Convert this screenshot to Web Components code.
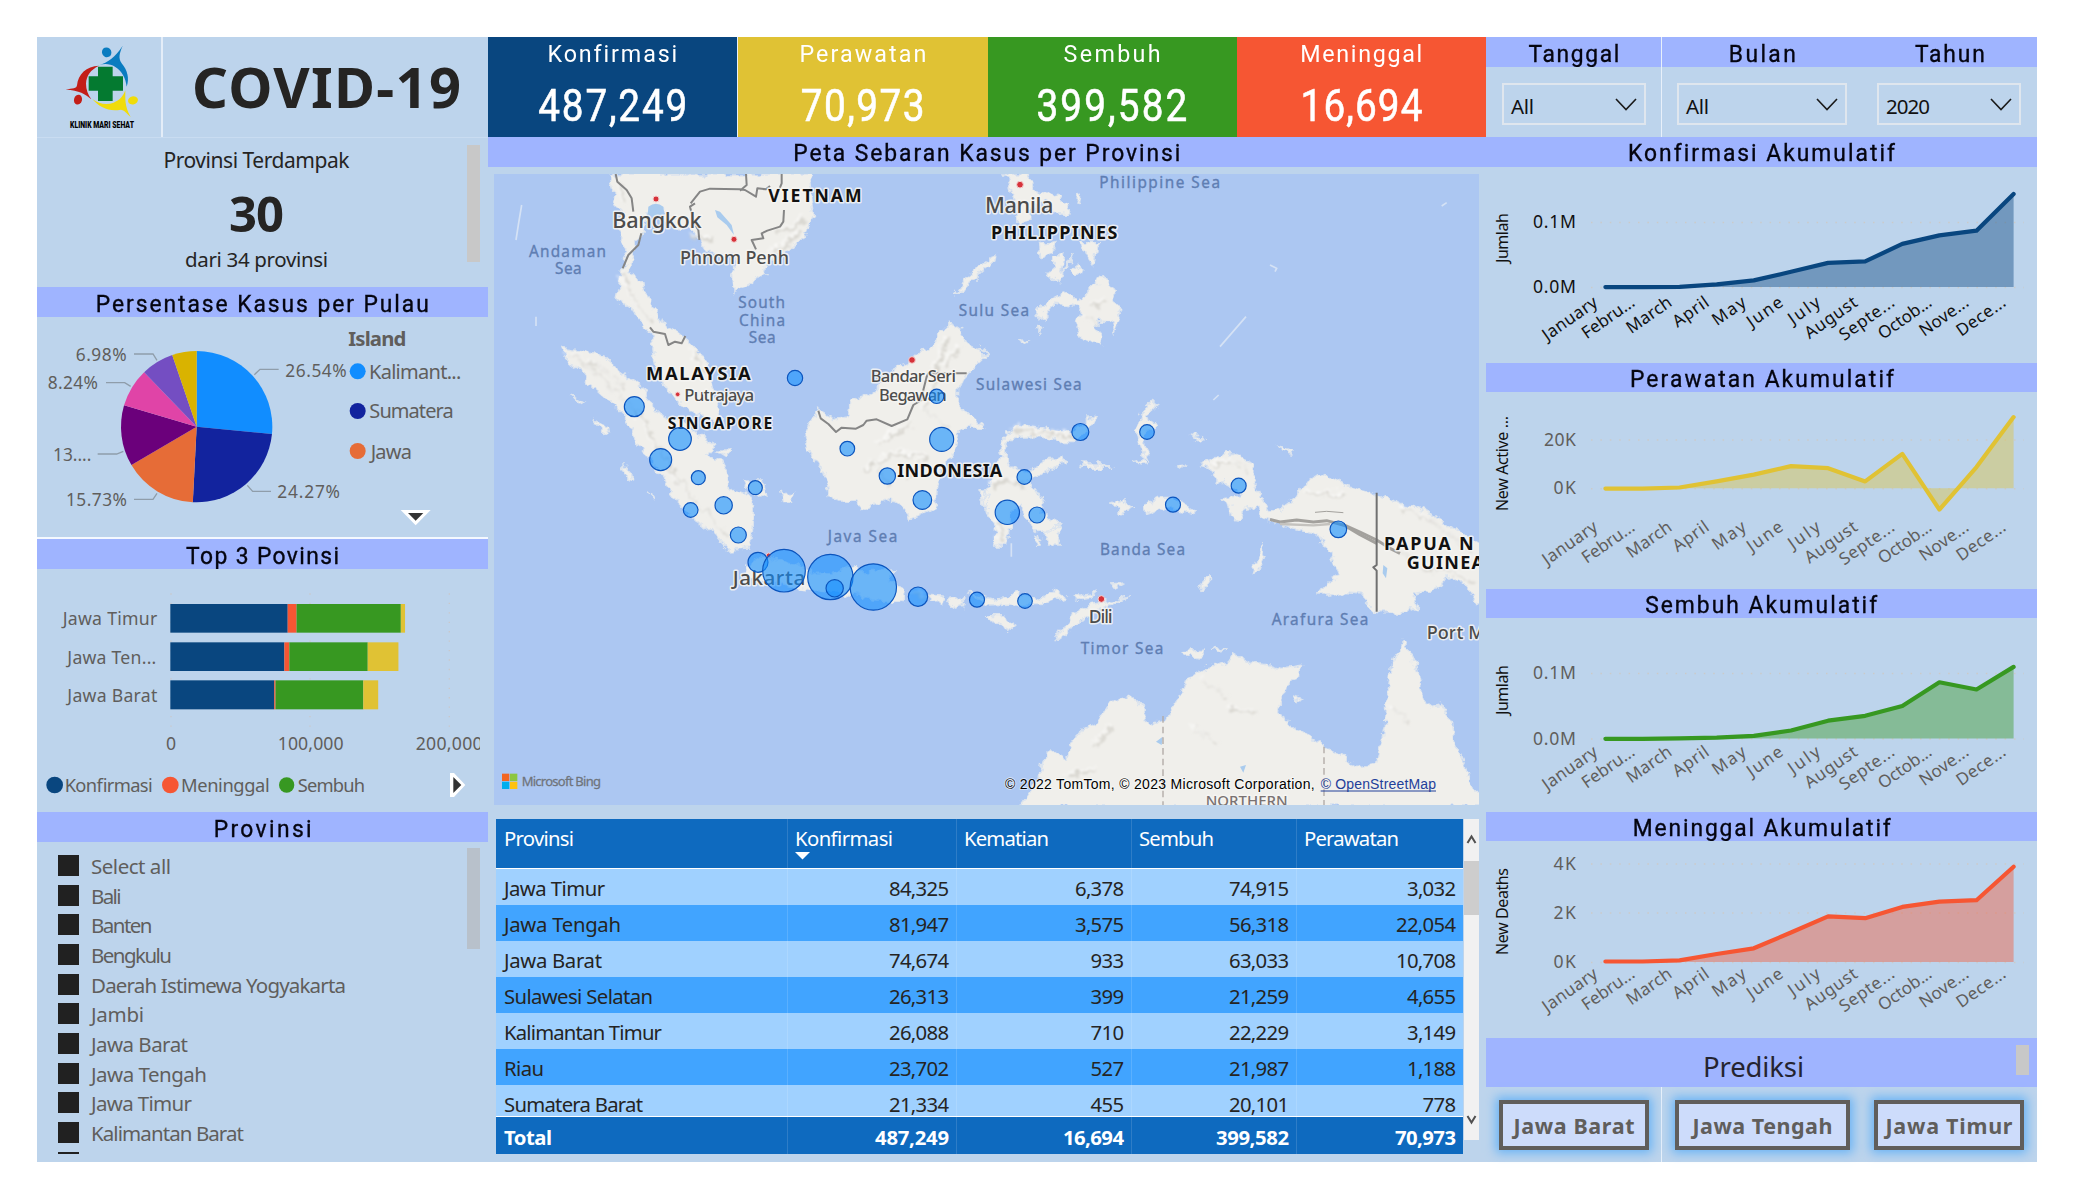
<!DOCTYPE html>
<html lang="id">
<head>
<meta charset="utf-8">
<title>COVID-19 Dashboard</title>
<style>
html,body{margin:0;padding:0;background:#fff}
body{width:2075px;height:1200px;overflow:hidden;font-family:"Noto Sans","Open Sans",sans-serif;color:#252423}
</style>
</head>
<body>
<covid-dashboard></covid-dashboard>
<script>
const SANS='"Noto Sans","Open Sans",sans-serif';
const DIN='Roboto,"Liberation Sans",sans-serif';

class Base extends HTMLElement{
  connectedCallback(){
    if(this.shadowRoot)return;
    const r=this.attachShadow({mode:'open'});
    r.innerHTML=`<style>*{box-sizing:border-box}:host{box-sizing:border-box;display:block}${this.css?this.css():''}</style>${this.html()}`;
  }
}
const def=(n,c)=>customElements.define(n,c);

/* svg text spread between two x positions */
const T=(x1,x2,y,s,fs,extra='')=>`<text x="${x1}" y="${y}" font-size="${fs}" textLength="${x2-x1}" ${extra}>${s}</text>`;

/* inline text whose tracking is adjusted to a given width; sx narrows the glyphs */
def('fit-text',class extends HTMLElement{
  connectedCallback(){
    if(this.shadowRoot)return;
    this.attachShadow({mode:'open'}).innerHTML='<style>:host{display:inline-block;white-space:nowrap}</style><slot></slot>';
    const sx=+this.getAttribute('sx')||1, w=+this.getAttribute('w')/sx;
    if(!w)return;
    const n=this.textContent.length, nat=this.getBoundingClientRect().width;
    const ls=(w+1-nat)/(n-1);
    this.style.letterSpacing=ls.toFixed(3)+'px';
    this.style.marginRight=(-ls).toFixed(3)+'px';
    if(sx!==1)this.style.transform=`scaleX(${sx})`;
  }
});

def('title-bar',class extends Base{
  css(){return `:host{display:flex;align-items:center;justify-content:center;background:#9fb4ff;font:400 24px/28px ${DIN};-webkit-text-stroke:.35px currentColor;color:#050510;padding-top:3px;overflow:hidden;white-space:nowrap}:host(.up){padding-top:1px}`}
  html(){return `<fit-text sx=".95" w="${this.getAttribute('w')}">${this.getAttribute('label')}</fit-text>`}
});

def('clinic-logo',class extends Base{
  css(){return `:host{width:126px;height:100px;border-right:2px solid #e4edf8}svg{display:block}`}
  html(){return `<svg width="124" height="100" viewBox="21 21 372 300">
    <ellipse cx="230" cy="67" rx="14" ry="15" fill="#0a7cc0" transform="rotate(-25 230 67)"/>
    <path d="M278 47C268 71 264 84 276 101C292 120 299 144 290 170C287 146 277 124 256 111C240 101 222 100 208 106C232 96 255 84 278 47Z" fill="#0a7cc0"/>
    <path d="M207 107C182 119 169 137 168 161C168 178 174 194 184 208C166 193 148 180 107 179C128 175 140 176 141 166C144 133 169 108 207 107Z" fill="#c31e18"/>
    <ellipse cx="144" cy="209" rx="12" ry="15" fill="#c31e18" transform="rotate(15 144 209)"/>
    <path d="M187 207C207 222 229 226 251 218C269 211 280 198 286 181C286 203 283 229 302 261C288 248 283 240 272 239C238 245 209 234 187 207Z" fill="#f0dc0a"/>
    <ellipse cx="309" cy="211" rx="15" ry="12" fill="#f0dc0a" transform="rotate(-15 309 211)"/>
    <path d="M204 110h44v29h31v43h-31v31h-44v-31h-28v-43h28z" fill="#047a30"/>
    <text x="120" y="294" font-family='${DIN}' font-size="25" font-weight="900" textLength="192" lengthAdjust="spacingAndGlyphs">KLINIK MARI SEHAT</text>
  </svg>`}
});

def('page-heading',class extends Base{
  css(){return `:host{flex:1;height:100px;display:flex;align-items:center;padding:0 0 2px 29px;font:700 56px/76px ${SANS};color:#252423}`}
  html(){return `<fit-text w="268">COVID-19</fit-text>`}
});

def('affected-card',class extends Base{
  css(){return `:host{height:150px;display:flex;border-top:1px solid #c9dcf1;padding:7px 8px 0 0;color:#252423;font:400 21px/30px ${SANS}}
    .c{flex:1;padding-left:9px;display:flex;flex-direction:column;align-items:center}
    .b{font:700 49px/60px ${SANS};margin:8px 0 1px}.s{font-size:20.5px}
    .bar{width:13px;height:117px;background:#c8c8c8}`}
  html(){return `<div class="c"><fit-text w="185">Provinsi Terdampak</fit-text><fit-text class="b" w="54">30</fit-text><fit-text class="s" w="142">dari 34 provinsi</fit-text></div><div class="bar"></div>`}
});

def('island-pie',class extends Base{
  css(){return `:host{height:222px;border-bottom:2px solid #f4f8ff}svg{display:block;font-family:${SANS}}`}
  html(){
    const v=[[26.54,'#118dff'],[24.27,'#12239e'],[15.73,'#e66c37'],[13.01,'#6b007b'],[8.24,'#e044a7'],[6.98,'#744ec2'],[5.23,'#d9b300']];
    let a=0,p='';const P=k=>[500+227*Math.sin(k*Math.PI/50),440-227*Math.cos(k*Math.PI/50)].map(n=>n.toFixed(1)).join(' ');
    for(const [s,c] of v){p+=`<path fill="${c}" d="M500 440L${P(a)}A227 227 0 0 1 ${P(a+s)}Z"/>`;a+=s}
    const L=[[673,284,690,268,746,268],[652,616,668,634,723,634],[381,640,369,658,312,658],[280,514,260,522,203,522],[302,319,284,308,228,308],[381,241,369,222,312,222]]
      .map(l=>`<polyline points="${l}" fill="none" stroke="#8f9daa" stroke-width="4"/>`).join('');
    return `<svg width="451" height="220" viewBox="21 111 1353 660" fill="#605e5c">${p}${L}
      ${T(137,290,242,'6.98%',52)}${T(53,204,327,'8.24%',52)}${T(69,184,543,'13....',52)}${T(108,291,678,'15.73%',52)}${T(766,950,291,'26.54%',52)}${T(742,930,654,'24.27%',52)}
      ${T(955,1129,197,'Island',61,'font-weight="700"')}
      <circle cx="983" cy="274" r="24" fill="#118dff"/><circle cx="983" cy="393" r="24" fill="#12239e"/><circle cx="983" cy="513" r="24" fill="#e66c37"/>
      ${T(1017,1294,297,'Kalimant...',60)}${T(1018,1271,413,'Sumatera',60)}${T(1022,1146,536,'Jawa',60)}
      <path d="M1112 690H1202L1157 736Z" fill="#fff"/><path d="M1134 699H1180L1157 722Z" fill="#333"/></svg>`}
});

def('top-bars',class extends Base{
  css(){return `:host{height:243px}svg{display:block;font-family:${SANS}}`}
  html(){
    const rows=[[222,86,84325,6378,74915,3032],[337,86,81947,3575,56318,22054],[451,87,74674,933,63033,10708]],C=['#09467f','#f65633','#379821','#e0c234'];
    let b='';
    for(const [y,h,...v] of rows){let x=421;v.forEach((n,i)=>{const w=n*.004175;b+=`<rect x="${x}" y="${y}" width="${w}" height="${h}" fill="${C[i]}"/>`;x+=w})}
    const g=[423,840,1258].map(x=>`<line x1="${x}" x2="${x}" y1="190" y2="592" stroke="#c9c8cb" stroke-width="4" stroke-dasharray="4 24.3"/>`).join('');
    return `<svg width="451" height="243" viewBox="21 117 1353 729" fill="#605e5c">${g}${b}
      ${T(98,382,285,'Jawa Timur',53)}${T(112,379,402,'Jawa Ten...',53)}${T(112,382,515,'Jawa Barat',53)}
      <text x="423" y="659" font-size="53" text-anchor="middle">0</text>${T(743,941,659,'100,000',53)}
      <svg x="1140" y="600" width="210" height="90" viewBox="1140 600 210 90">${T(1157,1358,659,'200,000',53)}</svg>
      <circle cx="74" cy="765" r="25" fill="#09467f"/><circle cx="421" cy="765" r="25" fill="#f65633"/><circle cx="770" cy="765" r="23" fill="#379821"/>
      ${T(104,368,787,'Konfirmasi',55)}${T(453,719,787,'Meninggal',55)}${T(803,1005,787,'Sembuh',55)}
      <path d="M1260 729H1272L1306 765L1272 801H1260Z" fill="#fff"/><path d="M1270 741L1294 765L1270 789Z" fill="#333"/></svg>`}
});

def('check-row',class extends Base{
  css(){return `:host{height:29.67px;flex:none;display:flex;align-items:flex-start;gap:12px;font:400 20.5px/24px ${SANS};color:#605e5c}
    i{width:21px;height:21px;background:#212121;flex:none}fit-text{margin-top:-1px}`}
  html(){const w=this.getAttribute('w');return `<i></i>${w?`<fit-text w="${w}">${this.getAttribute('label')}</fit-text>`:''}`}
});

def('province-slicer',class extends Base{
  css(){return `:host{height:320px;display:flex;justify-content:space-between;padding:6px 8px 8px 21px}
    .l{height:306px;padding-top:7px;overflow:hidden;display:flex;flex-direction:column}.s{width:13px;height:101px;background:#b8c1cb}`}
  html(){return `<div class="l">${[['Select all',79],['Bali',29.5],['Banten',60.5],['Bengkulu',80],['Daerah Istimewa Yogyakarta',254],['Jambi',52],['Jawa Barat',96],['Jawa Tengah',115],['Jawa Timur',100],['Kalimantan Barat',152],['',0]]
    .map(([l,w])=>`<check-row ${w?`w="${w}" label="${l}"`:''}></check-row>`).join('')}</div><div class="s"></div>`}
});

def('kpi-card',class extends Base{
  css(){return `:host{flex:1;height:100px;background:${this.getAttribute('color')};color:#fff;display:flex;flex-direction:column;align-items:center;font:400 24.5px/34px ${DIN}}
    .v{font-size:43.5px;line-height:56px;margin-top:8px;-webkit-text-stroke:.6px #fff}`}
  html(){const g=n=>this.getAttribute(n);return `<fit-text sx=".95" w="${g('lw')}">${g('label')}</fit-text><fit-text class="v" sx=".89" w="${g('vw')}">${g('value')}</fit-text>`}
});

def('case-map',class extends Base{
  css(){return `:host{height:631px;margin:7px 7px 0 6px;background:#acc7f2;overflow:hidden}svg{display:block;font-family:${SANS}}
    .sea text{fill:#5f7eb3;stroke:#5f7eb3;stroke-width:1px}.co text{fill:#111;font-weight:700}.ci text{fill:#4c4c4c;font-weight:500}.halo text{paint-order:stroke;stroke:#f7f6f3;stroke-width:9px;stroke-linejoin:round;stroke-opacity:.85}`}
  html(){
    const land=[
    'M385 42L393 80L410 130L424 160L411 205L430 250L440 300L425 330L416 380L408 415L450 440L480 480L512 515L522 590L535 640L558 680L590 725L640 760L690 782L722 775L705 700L690 640L660 580L620 540L580 508L535 480L520 450L500 405L495 365L470 365L450 335L455 300L470 250L492 215L500 150L550 142L562 190L600 205L645 205L660 240L680 270L705 286L762 282L770 305L758 345L762 395L795 382L833 352L855 344L860 310L890 287L940 262L975 235L1002 170L990 100L985 42Z',
    'M245 565L300 572L370 588L420 635L490 690L502 720L560 775L602 790L650 822L690 842L703 860L680 888L728 905L742 935L745 970L765 992L800 1000L822 1040L815 1110L806 1167L745 1170L700 1120L650 1082L590 1025L555 978L545 945L500 885L460 825L440 775L390 725L340 680L300 630L260 600Z',
    'M1015 752L1000 770L976 820L990 880L1015 920L1038 955L1045 1010L1080 1020L1130 1022L1138 1046L1200 1030L1235 1020L1278 1045L1285 1082L1330 1060L1365 1042L1370 1000L1380 955L1385 930L1400 900L1430 855L1440 805L1512 805L1462 760L1430 720L1430 690L1465 640L1525 580L1460 548L1440 510L1410 490L1380 520L1350 570L1325 572L1290 605L1250 620L1215 665L1165 705L1110 722L1105 770L1060 776Z',
    'M800 1215L845 1188L950 1215L1010 1240L1070 1235L1110 1215L1140 1232L1250 1230L1220 1265L1272 1285L1266 1322L1180 1320L1100 1302L940 1285L800 1250Z',
    'M1580 825L1615 793L1700 805L1770 820L1805 798L1830 770L1848 773L1820 808L1790 842L1740 842L1680 830L1612 832L1578 850L1575 900L1600 925L1640 932L1700 900L1745 893L1750 905L1700 935L1645 968L1665 990L1692 1030L1682 1060L1705 1078L1742 1088L1720 1112L1665 1115L1648 1080L1620 1030L1592 1052L1590 1100L1580 1156L1538 1155L1548 1100L1520 1060L1508 1020L1522 980L1545 930L1568 890L1560 850Z',
    'M1984 760L2020 723L2032 737L1997 768L2002 790L2032 785L2028 805L1990 812L1992 860L2012 902L1985 880L1968 800Z',
    'M2160 912L2200 900L2240 880L2290 893L2322 905L2322 960L2345 1005L2370 1052L2400 1050L2440 1020L2470 975L2520 943L2600 978L2650 988L2700 1010L2850 1060L2930 1110L3010 1160L3010 1350L2960 1282L2900 1248L2870 1290L2800 1305L2815 1340L2780 1357L2690 1355L2640 1302L2590 1298L2550 1305L2513 1305L2552 1260L2580 1250L2560 1200L2540 1152L2500 1122L2400 1092L2350 1075L2318 1040L2290 1045L2280 1078L2255 1075L2248 1030L2222 1010L2285 1005L2260 985L2210 960L2200 938Z',
    'M1620 1940L1680 1850L1690 1800L1720 1768L1760 1795L1790 1720L1850 1690L1890 1625L1950 1608L1990 1640L2000 1695L2058 1680L2078 1640L2108 1600L2120 1560L2180 1522L2240 1508L2260 1478L2310 1508L2370 1515L2400 1525L2465 1515L2455 1550L2430 1560L2420 1600L2388 1660L2450 1705L2530 1755L2600 1800L2650 1822L2690 1812L2716 1700L2722 1600L2740 1500L2770 1440L2800 1492L2825 1600L2842 1640L2882 1630L2918 1690L2925 1752L2958 1820L2970 1870L3010 1905L3010 1940Z',
    'M1572 42L1585 62L1600 110L1618 190L1650 182L1648 145L1690 125L1735 160L1770 165L1765 130L1722 98L1662 92L1640 42Z',
    'M1865 342L1895 378L1910 440L1920 470L1903 522L1890 482L1860 480L1842 500L1870 530L1862 560L1800 528L1785 492L1805 450L1770 438L1718 432L1680 482L1676 462L1700 425L1750 400L1775 408L1790 425L1850 372Z',
    'M1425 405L1450 360L1490 325L1550 285L1548 300L1500 340L1455 385Z',
    'M1675 250L1732 245L1715 275L1680 295ZM1805 245L1862 245L1845 268L1838 315L1820 290ZM1722 290L1755 272L1750 320L1740 368L1702 340L1725 320ZM1780 280L1765 320L1748 340ZM1775 330L1795 315L1812 330L1790 345ZM1668 505L1688 508L1675 516ZM1620 540L1645 543L1630 550ZM1790 110L1802 108L1798 128L1788 125Z',
    'M1500 560L1525 578L1505 590Z',
    'M1350 1300L1392 1302L1385 1328L1352 1330ZM1400 1320L1455 1310L1452 1340L1420 1345ZM1460 1300L1540 1320L1610 1300L1680 1318L1720 1290L1760 1310L1700 1330L1610 1332L1520 1335ZM1780 1310L1845 1300L1830 1312L1785 1320ZM1518 1370L1570 1370L1608 1395L1600 1408L1570 1398L1545 1388ZM1885 1275L1930 1272L1910 1282ZM1955 1310L1900 1330L1850 1350L1820 1375L1790 1385L1760 1420L1722 1448L1745 1410L1772 1370L1830 1335Z',
    'M2320 1235L2345 1155L2355 1190L2340 1230ZM2160 1275L2188 1245L2192 1260L2170 1290ZM1890 1030L1925 1022L1955 1045L1920 1060ZM1990 1035L2030 1015L2090 1015L2148 1055L2140 1062L2060 1040L1998 1060ZM1803 912L1860 912L1900 922L1810 922ZM1960 905L1995 895L2002 908L1985 910ZM2095 920L2122 918L2105 928ZM2130 825L2165 830L2150 838ZM2395 860L2430 875L2432 882L2405 876ZM2110 1475L2180 1470L2160 1495L2120 1490ZM2198 1465L2240 1470L2215 1475Z',
    'M345 780L385 800L390 825L370 820ZM428 910L455 940L458 960L440 950ZM272 705L305 725L295 730ZM505 995L525 1025L515 1015ZM790 960L850 960L858 1010L830 1015L800 985ZM905 1000L942 1000L935 1025L910 1025ZM710 870L750 870L740 888ZM1690 1110L1740 1100L1735 1155L1705 1155ZM1665 1130L1682 1140L1670 1150ZM1500 998L1530 1000L1515 1045L1505 1030ZM2440 1608L2470 1615L2450 1625Z'];
    const ridges=['M262 580L330 622L400 690L480 760L530 860L590 960L660 1040L740 1130','M280 590L360 620L440 690','M640 570L670 640','M1400 540L1370 640L1330 750L1400 800M1440 560L1400 620M1200 850L1300 790M1150 930L1260 880L1340 890L1280 960M1230 980L1180 900','M1600 810L1700 818L1780 830M1540 980L1570 960L1640 980M1560 1080L1570 1140','M2200 915L2260 905L2310 940','M1300 1300L1340 1310M1840 440L1880 420M1850 500L1820 470','M1900 1700L1850 1760M2170 1560L2240 1610M2140 1700L2210 1750M2250 1650L2330 1660M2740 1650L2790 1690M1760 1850L1850 1830','M2760 1170L2830 1230L2900 1230L2990 1270M2760 1040L2850 1080L2980 1180M2480 1000L2600 1010M640 230L700 240M880 280L960 220M900 220L980 180M430 350L460 420L520 490M420 70L440 130'];
    const faint='M125 135L115 195L108 240M168 470V498M2220 560L2298 470M2370 315L2390 325L2385 335M2885 138L2900 128M2200 720L2216 705M1594 1190V1150';
    const bub=[[463,740,30],[600,837,34],[542,899,33],[655,953,21],[826,983,21],[731,1036,26],[632,1050,22],[775,1125,24],[834,1207,30],[912,1232,64],[1051,1251,68],[1064,1285,26],[1180,1281,69.5],[1314,1310,29],[1491,1319,22.5],[1635,1323,22],[1327,1020,28],[1222,948,24.5],[1102,866,22],[1385,838,36],[1370,709,21.5],[945,654,23],[1801,816,25.5],[2001,816,22],[1633,951,22],[1582,1057,36.5],[1671,1065,24],[2079,1034,22.5],[2276,977,22.5],[2575,1108,25]];
    return `<svg width="985" height="631" viewBox="42 42 2955 1893">
      <defs><filter id="r" filterUnits="userSpaceOnUse" x="30" y="30" width="2980" height="1920"><feTurbulence type="fractalNoise" baseFrequency=".035" numOctaves="3" seed="4"/><feDisplacementMap in="SourceGraphic" scale="34" xChannelSelector="R" yChannelSelector="G"/></filter>
      <filter id="s" filterUnits="userSpaceOnUse" x="30" y="30" width="2980" height="1920"><feTurbulence type="fractalNoise" baseFrequency=".04" numOctaves="3" seed="9"/><feDisplacementMap in="SourceGraphic" scale="44" xChannelSelector="R" yChannelSelector="G" result="d"/><feGaussianBlur in="d" stdDeviation="2.5"/></filter></defs>
      <path d="${faint}" fill="none" stroke="#d5e2f5" stroke-width="5"/>
      <g filter="url(#r)"><path d="${land.join('')}" fill="#f0efeb" stroke="#dce4ee" stroke-width="4"/></g>
      <g filter="url(#s)" fill="none"><path d="${ridges.join('')}" stroke="#d3d1ca" stroke-width="8" opacity=".8"/><path d="${ridges.join('')}" stroke="#fff" stroke-width="5" opacity=".6" transform="translate(-10 -8)"/></g>
      <g fill="none" stroke="#a3a19d" stroke-linejoin="round"><path d="M2370 1078L2400 1086L2450 1080L2500 1086L2540 1082L2600 1098L2640 1116L2690 1140L2730 1165L2760 1180" stroke-width="9"/><path d="M2600 1100L2640 1124L2690 1150" stroke-width="9"/><path d="M2400 1092L2500 1096L2550 1092" stroke="#c4c2be" stroke-width="7"/><path d="M2505 1057L2540 1054L2590 1058" stroke-width="3"/></g>
      <path d="M505 140Q528 122 550 140L552 168H503ZM705 150L720 155L755 195L762 225L740 195L712 172ZM2710 1215L2722 1225L2718 1255L2708 1240ZM2280 1820L2298 1815L2290 1838ZM2028 1745L2048 1730L2045 1755Z" fill="#a9cbee"/>
      <g fill="none" stroke="#858585" stroke-width="6" stroke-linejoin="round">
        <path d="M407 42L412 65L440 90L455 115L460 155M484 220L475 255L445 285L428 325M645 130L630 140L635 160L640 185L655 210L658 240M632 130L660 95L690 86L780 88L795 90L828 110L832 85L858 88L870 78M780 92L800 75L798 42M905 42V70L895 95M912 150L910 185L900 200L862 212L845 220L850 235L815 240L828 268M510 502L520 515L555 522L565 555L585 545L605 550L616 528"/>
        <path d="M1015 752L1022 775L1045 792L1068 816L1085 803L1128 806L1150 795L1160 782L1190 778L1235 798L1282 778L1300 735L1325 720L1330 690L1340 650L1345 640H1460"/>
        <path d="M2690 998V1215L2680 1222L2690 1232V1355" stroke="#707070"/></g>
      <path d="M2049 1668V1935M2532 1760V1935" stroke="#b0a9a5" stroke-width="4" stroke-dasharray="20 12" fill="none"/>
      <g fill="#d6323a" stroke="#f4d0d0" stroke-width="3"><circle cx="528" cy="117" r="9"/><circle cx="762" cy="238" r="9"/><circle cx="593" cy="703" r="7"/><circle cx="1296" cy="600" r="10"/><circle cx="1620" cy="74" r="10"/><circle cx="1864" cy="1317" r="10"/><circle cx="866" cy="1186" r="7"/></g>
      <g class="sea">${T(147,378,291,'Andaman',46)}${T(225,305,342,'Sea',46)}${T(775,915,445,'South',46)}${T(777,915,497,'China',46)}${T(806,887,549,'Sea',46)}
        ${T(1858,2220,84,'Philippine Sea',46)}${T(1436,1647,468,'Sulu Sea',46)}${T(1488,1805,690,'Sulawesi Sea',46)}${T(1043,1252,1145,'Java Sea',46)}${T(1860,2115,1186,'Banda Sea',46)}${T(1802,2050,1482,'Timor Sea',46)}${T(2375,2665,1396,'Arafura Sea',46)}</g>
      <g class="co halo">${T(865,1145,125,'VIETNAM',53)}${T(498,812,660,'MALAYSIA',55)}${T(563,877,806,'SINGAPORE',47)}${T(1252,1567,950,'INDONESIA',54)}${T(1533,1912,238,'PHILIPPINES',54)}${T(2712,2981,1169,'PAPUA N',54)}${T(2780,3012,1227,'GUINEA',54)}</g>
      <g class="ci halo">${T(397,665,205,'Bangkok',65)}${T(600,927,313,'Phnom Penh',54)}${T(613,823,722,'Putrajaya',51)}${T(1172,1428,665,'Bandar Seri',50)}${T(1197,1400,722,'Begawan',50)}${T(1515,1720,158,'Manila',65)}${T(758,976,1274,'Jakarta',62)}${T(1826,1898,1388,'Dili',54)}${T(2840,3014,1438,'Port M',54)}${T(2177,2423,1938,'NORTHERN',45,'style="fill:#7a7272"')}</g>
      <g fill="#118dff" fill-opacity=".6" stroke="#0b54bd" stroke-width="3.500">${bub.map(b=>`<circle cx="${b[0]}" cy="${b[1]}" r="${b[2]}"/>`).join('')}</g>
      <path fill="#f26522" d="M66 1841h22v22H66z"/><path fill="#8dc63f" d="M90 1841h22v22H90z"/><path fill="#00aeef" d="M66 1865h22v22H66z"/><path fill="#ffc20e" d="M90 1865h22v22H90z"/>
      ${T(125,363,1879,'Microsoft Bing',39,'fill="#6f747c" stroke="#6f747c" stroke-width=".8"')}
      <g font-family="Liberation Sans,Arial,sans-serif">${T(1575,2504,1886,'© 2022 TomTom, © 2023 Microsoft Corporation,',42,'fill="#000" style="paint-order:stroke;stroke:#fff;stroke-width:5px;stroke-opacity:.6"')}${T(2522,2868,1886,'© OpenStreetMap',42,'fill="#23409a"')}</g><path d="M2522 1893H2868" stroke="#23409a" stroke-width="3"/></svg>`}
});

def('province-table',class extends Base{
  css(){return `:host{display:flex;height:335px;margin:14px 7px 0 6px;padding-left:2px;font:400 20.3px/30px ${SANS};color:#252423}
    .t{width:967px;height:335px;display:flex;flex-direction:column}
    .r{display:grid;grid-template-columns:291px 169px 175px 165px 167px;height:36px;flex:none}
    .r>div{padding:4px 7px 0 7px;text-align:right;border-left:1px solid #ffffff22;overflow:hidden}.r>div:first-child{text-align:left;border:0;padding-left:8px}
    .h{height:49px;background:#0e6abf;color:#fff;flex:none}.h>div{text-align:left;padding-top:4px;padding-left:7px}
    .h svg{display:block;margin:-2px 0 0 0}
    .body{height:249px;border-top:1px solid #fff;overflow:hidden;border-bottom:1px solid #fff}.a{background:#a0d1ff}.b{background:#41a4ff}
    .f{background:#0e6abf;color:#fff;font-weight:700;height:37px}.f>div{padding-top:5px}
    .s{width:15px;height:321px;margin-left:1px;background:#f1f1f1;display:flex;flex-direction:column;align-items:center}
    .s .th{width:15px;height:54px;background:#cdcdcd;margin-bottom:183px}.s svg{display:block}`}
  html(){
    const R=[['Jawa Timur',100,'84,325','6,378','74,915','3,032'],['Jawa Tengah',116,'81,947','3,575','56,318','22,054'],['Jawa Barat',97,'74,674','933','63,033','10,708'],['Sulawesi Selatan',148,'26,313','399','21,259','4,655'],['Kalimantan Timur',157,'26,088','710','22,229','3,149'],['Riau',39,'23,702','527','21,987','1,188'],['Sumatera Barat',138,'21,334','455','20,101','778']];
    const W={3:32.5,5:48,6:59};
    return `<div class="t"><div class="r h"><div><fit-text w="69">Provinsi</fit-text></div><div><fit-text w="97">Konfirmasi</fit-text><svg width="15" height="9"><path d="M0 1H15L7.5 8.5Z" fill="#fff"/></svg></div><div><fit-text w="84">Kematian</fit-text></div><div><fit-text w="74">Sembuh</fit-text></div><div><fit-text w="94">Perawatan</fit-text></div></div>
    <div class="body">${R.map(([n,w,...v],i)=>`<div class="r ${i%2?'b':'a'}"><div><fit-text w="${w}">${n}</fit-text></div>${v.map(x=>`<div><fit-text w="${W[x.length]}">${x}</fit-text></div>`).join('')}</div>`).join('')}</div>
    <div class="r f"><div><fit-text w="47">Total</fit-text></div><div><fit-text w="73">487,249</fit-text></div><div><fit-text w="60">16,694</fit-text></div><div><fit-text w="72">399,582</fit-text></div><div><fit-text w="60">70,973</fit-text></div></div></div>
    <div class="s"><svg width="15" height="42"><path d="M3.5 24L7.5 17.5L11.500 24" fill="none" stroke="#505050" stroke-width="2"/></svg><div class="th"></div><svg width="15" height="42"><path d="M3.500 18L7.500 24.500L11.500 18" fill="none" stroke="#505050" stroke-width="2"/></svg></div>`}
});

def('drop-filter',class extends Base{
  css(){const g=n=>this.getAttribute(n);return `:host{width:${g('cw')}px;height:100px;${g('line')?'border-right:1px solid #e8f0fa;':''}}
    title-bar{height:30px}
    .b{margin:16px 0 0 ${g('ml')}px;width:${g('bw')}px;height:42px;border:2px solid #dfe6ee;display:flex;align-items:center;justify-content:space-between;padding:4px 7px 0 7px;font:400 20.5px/30px ${SANS};color:#111}svg{margin-top:-3px}`}
  html(){const g=n=>this.getAttribute(n);return `<title-bar label="${g('label')}" w="${g('w')}"></title-bar><div class="b"><fit-text w="${g('vw')}">${g('value')}</fit-text><svg width="22" height="13"><path d="M1 1L11 11.500L21 1" fill="none" stroke="#1a1a1a" stroke-width="1.600"/></svg></div>`}
});

const CH={
 konfirmasi:{y:167,h:196,l:0,c:'#09467f',ink:'#111',o:.42,t:'Jumlah',tr:[263,213],g:[[222.5,'0.1M',1533.5],[287.5,'0.0M',1533.5]],p:[720,720,719,712,701,677,652,648,599,575,562,459].map(v=>30+v/2.8)},
 perawatan:{y:392,h:197,l:224.6,c:'#e0c234',ink:'#605e5c',o:.4,t:'New Active ...',tr:[511,416],g:[[440,'20K',1544.5],[488.800,'0K',1554]],p:[1284,1284,1281,1264,1245,1221,1227,1264,1187,1343,1224,1084].map(v=>30+v/2.8)},
 sembuh:{y:618,h:194,l:449.5,c:'#379821',ink:'#605e5c',o:.42,t:'Jumlah',tr:[715,665],g:[[673.500,'0.1M',1533.5],[739,'0.0M',1533.5]],p:[422,422,421,419,414,400,374,361,335,272,291,231].map(v=>580+v/2.658)},
 meninggal:{y:841,h:197,l:671.5,c:'#f65633',ink:'#605e5c',o:.42,t:'New Deaths',tr:[955,868],g:[[864,'4K',1554],[913,'2K',1554],[962.600,'0K',1554]],p:[1014,1014,1011,994,979,937,894,899,869,855,851,762].map(v=>580+v/2.658)}};
def('trend-chart',class extends Base{
  css(){return `:host{height:${CH[this.getAttribute('kind')].h}px}svg{display:block;font-family:${SANS}}`}
  html(){
    const d=CH[this.getAttribute('kind')],X=i=>1605.4+i*37.11,base=d.g[d.g.length-1][0]-.6;
    const pts=d.p.map((y,i)=>`${X(i).toFixed(1)},${y.toFixed(1)}`).join(' ');
    const M=[['January',63],['Febru...',60],['March',51],['April',40],['May',37],['June',40],['July',35],['August',60],['Septe...',63],['Octob...',61],['Nove...',56],['Dece...',56]];
    const mid=(d.tr[0]-d.tr[1]);
    return `<svg width="551" height="${d.h}" viewBox="1486 ${d.y} 551 ${d.h}" fill="${d.ink}">
     ${d.g.map(([y,s,x])=>`<line x1="1591" x2="2024" y1="${y}" y2="${y}" stroke="#cbcac9" stroke-width="1.500" stroke-dasharray="1.500 7.900"/>${T(x-.5,1576,y+5.5,s,17.600)}`).join('')}
     <polygon points="${X(0)},${base} ${pts} ${X(11)},${base}" fill="${d.c}" fill-opacity="${d.o}"/>
     <polyline points="${pts}" fill="none" stroke="${d.c}" stroke-width="4.200" stroke-linejoin="round" stroke-linecap="round"/>
     ${M.map(([s,w],i)=>`<text transform="translate(${X(i)-6.5} ${305+d.l}) rotate(-35)" x="${-w}" y="0" font-size="17" textLength="${w}">${s}</text>`).join('')}
     <text transform="translate(1508 ${d.tr[0]}) rotate(-90)" font-size="16" fill="#111" textLength="${mid}">${d.t}</text></svg>`}
});

def('predict-title',class extends Base{
  css(){return `:host{height:49px;background:#9fb4ff;display:flex;justify-content:space-between;padding:7px 8px 0 0;font:400 27.500px/42px ${SANS};color:#252430}
    .c{flex:1;text-align:center;padding:1px 0 0 5px}i{width:13px;height:30px;background:#c8c8c8;flex:none}`}
  html(){return `<div class="c"><fit-text w="100">Prediksi</fit-text></div><i></i>`}
});
def('predict-button',class extends Base{
  css(){const g=n=>this.getAttribute(n);return `:host{width:${g('cw')}px;height:75px;padding:13px 0 0 ${g('ml')}px;${g('line')?'border-right:1px solid #e8f0fa;':''}}
    div{width:${g('bw')}px;height:50px;border:4px solid #605e5c;background:#cddcfb;box-shadow:0 0 10px 3px #68b3f5;display:flex;align-items:center;justify-content:center;font:700 21.500px/30px ${SANS};color:#605e5c;padding-top:1px}`}
  html(){const g=n=>this.getAttribute(n);return `<div><fit-text w="${g('w')}">${g('label')}</fit-text></div>`}
});

def('covid-dashboard',class extends Base{
  css(){return `:host{width:2000px;height:1125px;margin:37px 0 0 37px;background:#bdd4ec;display:grid;grid-template-columns:451px 998px 551px}
    .row{display:flex}.col{min-width:0}.l>title-bar,.m>title-bar{height:30px}.x>title-bar{height:29px}.x>title-bar.up{height:30px}`}
  html(){return `
  <div class="col l">
    <div class="row"><clinic-logo></clinic-logo><page-heading></page-heading></div>
    <affected-card></affected-card>
    <title-bar label="Persentase Kasus per Pulau" w="332"></title-bar><island-pie></island-pie>
    <title-bar label="Top 3 Povinsi" w="152"></title-bar><top-bars></top-bars>
    <title-bar label="Provinsi" w="97"></title-bar><province-slicer></province-slicer>
  </div>
  <div class="col m">
    <div class="row"><kpi-card color="#09467f" label="Konfirmasi" lw="128" value="487,249" vw="148"></kpi-card><kpi-card style="border-left:1px solid #e8f0fa" color="#e0c234" label="Perawatan" lw="126" value="70,973" vw="123"></kpi-card><kpi-card color="#379821" label="Sembuh" lw="96" value="399,582" vw="150"></kpi-card><kpi-card color="#f65633" label="Meninggal" lw="121" value="16,694" vw="121"></kpi-card></div>
    <title-bar class="up" label="Peta Sebaran Kasus per Provinsi" w="386"></title-bar>
    <case-map></case-map><province-table></province-table>
  </div>
  <div class="col x">
    <div class="row"><drop-filter cw="176" ml="16" bw="144" label="Tanggal" w="90" value="All" vw="22" line="1"></drop-filter><drop-filter cw="200" ml="15" bw="170" label="Bulan" w="66" value="All" vw="22"></drop-filter><drop-filter cw="175" ml="15" bw="144" label="Tahun" w="69" value="2020" vw="43"></drop-filter></div>
    <title-bar class="up" label="Konfirmasi Akumulatif" w="265"></title-bar><trend-chart kind="konfirmasi"></trend-chart>
    <title-bar label="Perawatan Akumulatif" w="263"></title-bar><trend-chart kind="perawatan"></trend-chart>
    <title-bar label="Sembuh Akumulatif" w="231"></title-bar><trend-chart kind="sembuh"></trend-chart>
    <title-bar label="Meninggal Akumulatif" w="257"></title-bar><trend-chart kind="meninggal"></trend-chart>
    <predict-title></predict-title>
    <div class="row"><predict-button cw="176" ml="13" bw="150" label="Jawa Barat" w="120" line="1"></predict-button><predict-button cw="200" ml="13" bw="175" label="Jawa Tengah" w="139"></predict-button><predict-button cw="175" ml="12" bw="150" label="Jawa Timur" w="126"></predict-button></div>
  </div>`}
});
</script>
</body>
</html>
